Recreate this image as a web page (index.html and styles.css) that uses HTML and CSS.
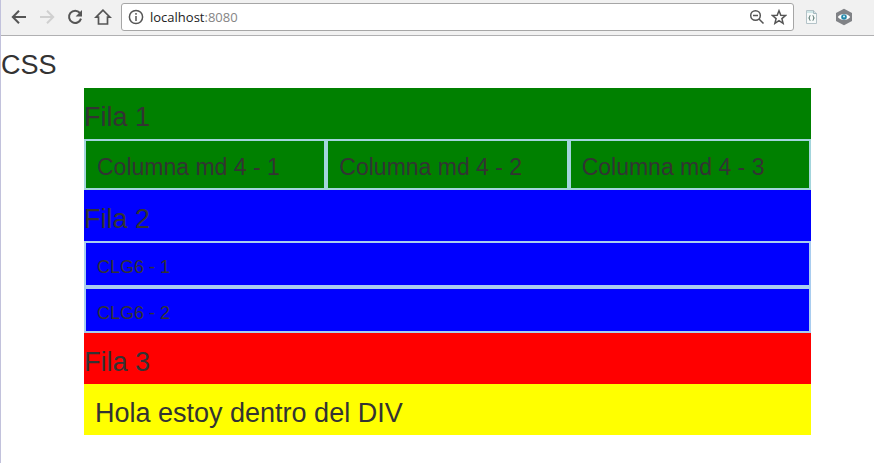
FILE: index.html
```html
<!DOCTYPE html>
<html lang="es">
<head>
<meta charset="utf-8">
<title>localhost:8080</title>
<link rel="stylesheet" href="styles.css">
</head>
<body>
<header class="toolbar">
  <nav class="nav">
    <button class="icon-button" type="button" aria-label="Atrás">
      <svg class="icon" viewBox="0 0 16 16"><path d="M15 8H2M8 1.7 1.8 8 8 14.3"/></svg>
    </button>
    <button class="icon-button" type="button" aria-label="Adelante" disabled>
      <svg class="icon" viewBox="0 0 16 16"><path d="M1 8h13M8 1.7 14.2 8 8 14.3"/></svg>
    </button>
    <button class="icon-button" type="button" aria-label="Recargar">
      <svg class="icon" viewBox="0 0 16 16"><path d="M12.9 4A6.1 6.1 0 1 0 14 9.6"/><path class="solid" d="M15 1v6.4H8.6z"/></svg>
    </button>
    <button class="icon-button" type="button" aria-label="Inicio">
      <svg class="icon home" viewBox="0 0 18 18"><path d="M9 2.200 2 9.200h2.500V16h9V9.200H16z"/></svg>
    </button>
  </nav>
  <div class="address">
    <svg class="icon info" viewBox="0 0 16 16"><circle cx="8" cy="8" r="6.6"/><path d="M8 7v5M8 4v1.8"/></svg>
    <div class="url"><span class="host">localhost</span>:8080</div>
    <button class="icon-button small" type="button" aria-label="Zoom">
      <svg class="icon thin" viewBox="0 0 16 16"><circle cx="6.5" cy="6.5" r="4.8"/><path d="M4 6.5h5M10 10l4.5 4.5"/></svg>
    </button>
    <button class="icon-button small" type="button" aria-label="Marcador">
      <svg class="icon thin" viewBox="0 0 16 16"><path d="m8 1.7 1.8 4.5 4.8.3-3.7 3.1 1.2 4.7L8 11.7l-4.1 2.6 1.2-4.7-3.7-3.1 4.8-.3z"/></svg>
    </button>
  </div>
  <button class="icon-button extension" type="button" aria-label="Código">
    <svg class="icon" viewBox="0 0 16 16"><path fill="#f7fafa" stroke="#b4c3c8" stroke-width="1" d="M2.5 1.5h7l3 3v10h-10z"/><path fill="#cfe6e7" stroke="none" d="M3 2h6v2H3z"/><path fill="#d5dfe2" stroke="#a4b9bf" stroke-width="1" d="M9.500 1.500v3h3"/><path stroke="#6c857f" stroke-width="1.100" d="M6.500 6.500c-1.500 0-.5 2-1.500 2.500 1 .5 0 2.500 1.500 2.500M8.500 6.500c1.500 0 .5 2 1.500 2.500-1 .5 0 2.500-1.500 2.500"/></svg>
  </button>
  <button class="icon-button extension" type="button" aria-label="Vista">
    <svg class="icon eye" viewBox="0 0 18 18"><path fill="#808286" stroke="none" d="m9 .8 8 4.200v8L9 17.200 1 13V5z"/><path fill="#fff" stroke="none" d="M2.800 9C5.500 5 12.500 5 15.200 9c-2.700 4-9.700 4-12.400 0z"/><circle cx="9" cy="9" r="2.800" fill="#2588a9" stroke="none"/><circle cx="9" cy="8.600" r="1" fill="#d9f2fa" stroke="none"/></svg>
  </button>
</header>
<main class="page">
  <h2 class="title">CSS</h2>
  <div class="container">
    <section class="green">
      <h2 class="title">Fila 1</h2>
      <div class="columns">
        <h3 class="cell column">Columna md 4 - 1</h3>
        <h3 class="cell column">Columna md 4 - 2</h3>
        <h3 class="cell column">Columna md 4 - 3</h3>
      </div>
    </section>
    <section class="blue">
      <h2 class="title">Fila 2</h2>
      <h4 class="cell">CLG6 - 1</h4>
      <h4 class="cell">CLG6 - 2</h4>
    </section>
    <section class="red">
      <h2 class="title">Fila 3</h2>
    </section>
    <section class="yellow">
      <h2 class="title">Hola estoy dentro del DIV</h2>
    </section>
  </div>
</main>
</body>
</html>
```
FILE: styles.css
```css
* {
  box-sizing: border-box;
}

body {
  margin: 0;
  min-height: 100vh;
  border-left: 1px solid #c2c2dc;
  background: #fff;
  color: #333;
  font-family: "Liberation Sans", Arial, sans-serif;
}

h2,
h3,
h4 {
  margin: 0;
  font-weight: 400;
}

.toolbar {
  display: flex;
  align-items: center;
  height: 36px;
  padding: 0 20px 2px 8px;
  border-bottom: 1px solid #b0b0b2;
  background: #f1f1f1;
}

.nav {
  display: flex;
  gap: 8px;
  margin-right: 8px;
}

.icon-button {
  display: flex;
  align-items: center;
  justify-content: center;
  width: 20px;
  height: 20px;
  padding: 0;
  border: 0;
  background: none;
  color: #555;
}

.icon-button:disabled {
  color: #d0d0d0;
}

.icon {
  width: 16px;
  height: 16px;
  fill: none;
  stroke: currentColor;
  stroke-width: 2;
}

.icon .solid {
  fill: currentColor;
  stroke: none;
}

.address {
  display: flex;
  flex: 1;
  align-items: center;
  gap: 2px;
  height: 28px;
  padding: 0 4px 0 6px;
  border: 1px solid #a6a6a6;
  border-radius: 3px;
  background: #fff;
}

.info {
  color: #555;
  stroke-width: 1.5;
}

.url {
  flex: 1;
  padding-left: 4px;
  color: #858585;
  font-family: "Open Sans", "Noto Sans", sans-serif;
  font-size: 13px;
}

.host {
  color: #222;
}

.small .icon {
  stroke-width: 1.5;
}

.extension {
  margin-left: 8px;
}

.extension + .extension {
  margin-left: 12px;
}

.home,
.eye {
  width: 18px;
  height: 18px;
}

.home {
  stroke-width: 1.7;
}

.title {
  padding: 14px 0 7px;
  font-size: 27px;
  line-height: 30px;
}

.container {
  margin: 1px 63px 0 83px;
}

.columns {
  display: grid;
  grid-template-columns: repeat(3, 1fr);
}

.cell {
  padding: 14px 11px 8px;
  border: 2px solid #a9cdef;
  font-size: 18px;
  line-height: 20px;
}

.column {
  padding: 13px 11px 8px;
  border-color: #a3d5dc;
  font-size: 23px;
  line-height: 26px;
}

.green {
  background: #008000;
}

.blue {
  background: #00f;
}

.red {
  background: #f00;
}

.yellow {
  padding-left: 11px;
  background: #ff0;
}
```
